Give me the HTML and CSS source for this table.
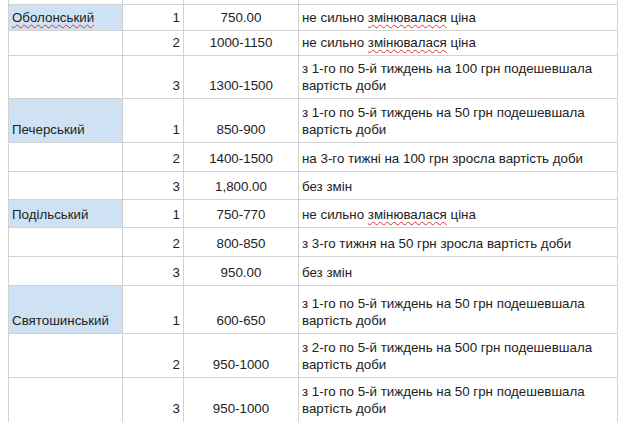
FILE: index.html
```html
<!DOCTYPE html>
<html>
<head>
<meta charset="utf-8">
<link rel="stylesheet" href="styles.css">
</head>
<body>
<div class="sheet">
  <div class="c"></div><div class="c"></div><div class="c"></div><div class="c"></div>

  <div class="c a blue"><div><span class="sp">Оболонський</span></div></div><div class="c n"><div>1</div></div><div class="c p"><div>750.00</div></div><div class="c t"><div>не сильно <span class="sp">змінювалася</span> ціна</div></div>
  <div class="c a"></div><div class="c n"><div>2</div></div><div class="c p"><div>1000-1150</div></div><div class="c t"><div>не сильно <span class="sp">змінювалася</span> ціна</div></div>
  <div class="c a"></div><div class="c n"><div>3</div></div><div class="c p"><div>1300-1500</div></div><div class="c t"><div>з 1-го по 5-й тиждень на 100 грн подешевшала вартість доби</div></div>

  <div class="c a blue"><div>Печерський</div></div><div class="c n"><div>1</div></div><div class="c p"><div>850-900</div></div><div class="c t"><div>з 1-го по 5-й тиждень на 50 грн подешевшала вартість доби</div></div>
  <div class="c a"></div><div class="c n"><div>2</div></div><div class="c p"><div>1400-1500</div></div><div class="c t"><div>на 3-го тижні на 100 грн зросла вартість доби</div></div>
  <div class="c a"></div><div class="c n"><div>3</div></div><div class="c p"><div>1,800.00</div></div><div class="c t"><div>без змін</div></div>

  <div class="c a blue"><div>Подільський</div></div><div class="c n"><div>1</div></div><div class="c p"><div>750-770</div></div><div class="c t"><div>не сильно <span class="sp">змінювалася</span> ціна</div></div>
  <div class="c a"></div><div class="c n"><div>2</div></div><div class="c p"><div>800-850</div></div><div class="c t"><div>з 3-го тижня на 50 грн зросла вартість доби</div></div>
  <div class="c a"></div><div class="c n"><div>3</div></div><div class="c p"><div>950.00</div></div><div class="c t"><div>без змін</div></div>

  <div class="c a blue"><div>Святошинський</div></div><div class="c n"><div>1</div></div><div class="c p"><div>600-650</div></div><div class="c t"><div>з 1-го по 5-й тиждень на 50 грн подешевшала вартість доби</div></div>
  <div class="c a"></div><div class="c n"><div>2</div></div><div class="c p"><div>950-1000</div></div><div class="c t"><div>з 2-го по 5-й тиждень на 500 грн подешевшала вартість доби</div></div>
  <div class="c a last"></div><div class="c n last"><div>3</div></div><div class="c p last"><div>950-1000</div></div><div class="c t last"><div>з 1-го по 5-й тиждень на 50 грн подешевшала вартість доби</div></div>
</div>
</body>
</html>
```

FILE: styles.css
```css
html, body {
  margin: 0;
  padding: 0;
  background: #ffffff;
  overflow: hidden;
}
.sheet {
  margin-left: 8px;
  width: 608px;
  display: grid;
  grid-template-columns: 113px 60px 114px 318px;
  grid-template-rows: 4px 25px 24px 42px 43px 28px 27px 27px 28px 28px 47px 43px 60px;
  gap: 1px;
  padding: 0 1px;
  background: #d2d2d2;
  font-family: "Liberation Sans", Arial, sans-serif;
  font-size: 13.33px;
  line-height: 17px;
  color: #222222;
}
.c {
  background: #ffffff;
  display: flex;
  flex-direction: column;
  justify-content: flex-end;
  padding: 0 3px 4px 3px;
  overflow: hidden;
}
.blue {
  background: #cfe2f3;
}
.n {
  text-align: right;
}
.p {
  text-align: center;
}
.t {
  text-align: left;
}
.last {
  justify-content: flex-start;
  padding-top: 5px;
}
.n.last,
.p.last {
  padding-top: 22px;
}
.sp {
  text-decoration: underline wavy #e03030;
  text-decoration-thickness: 1px;
  text-underline-offset: 2px;
}
```
